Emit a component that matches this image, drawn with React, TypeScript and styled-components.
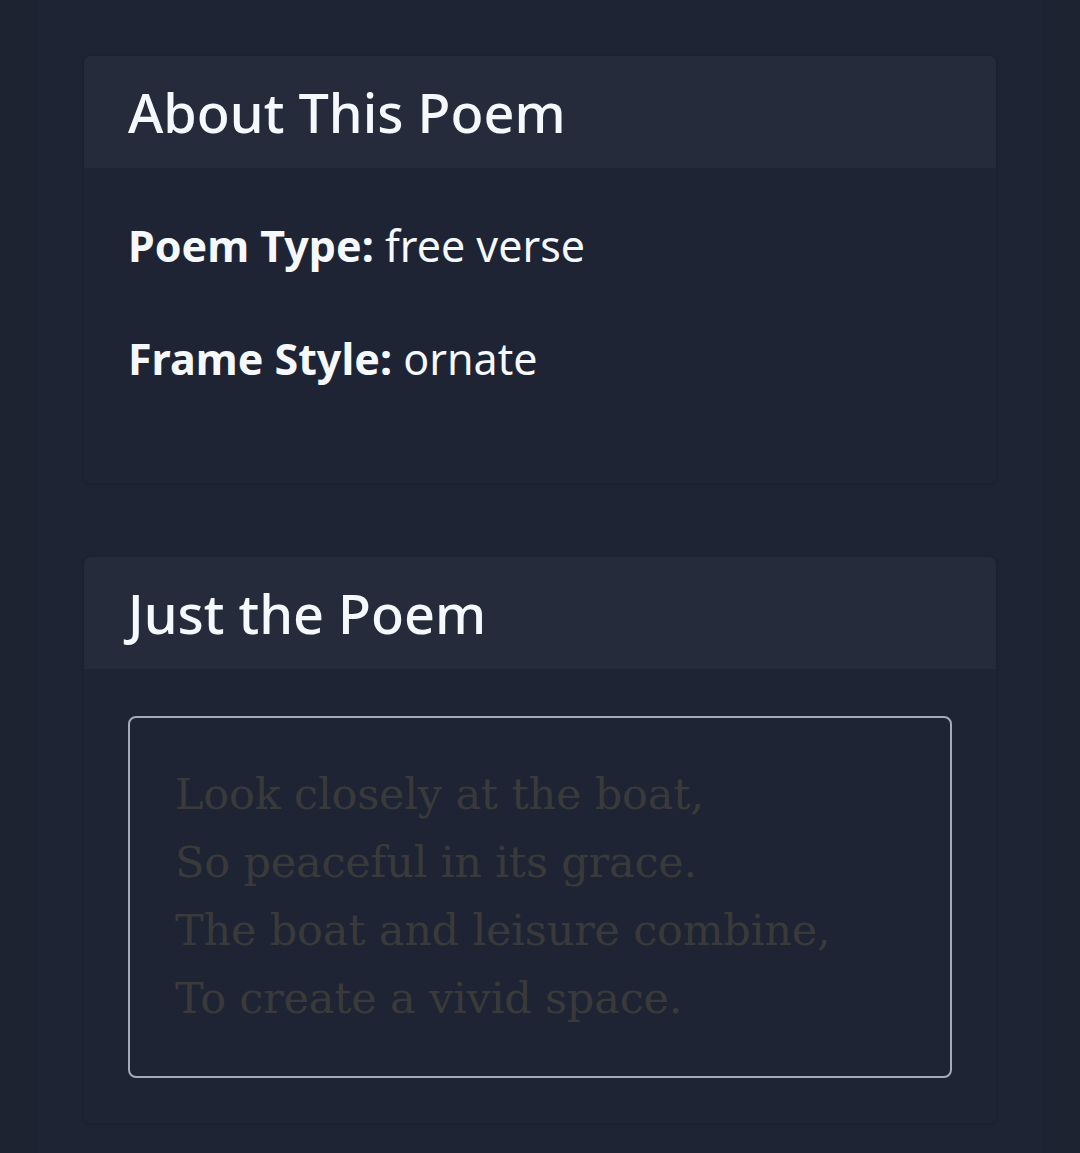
import React from "react";
import styled, { createGlobalStyle } from "styled-components";

const Global = createGlobalStyle`
  html, body { margin: 0; padding: 0; background: #1d2331; }
  body { font-family: "Noto Sans", "Open Sans", sans-serif; color: #f5f8fc; }
  * { box-sizing: border-box; }
`;

const Page = styled.div`
  width: 1010px;
  min-height: 1153px;
  margin: 0 auto;
  padding: 55px 47px 28px;
  background: #1e2433;
  border-left: 1px solid #1b2130;
  border-right: 1px solid #1b2130;
  display: flex;
  flex-direction: column;
  gap: 72px;
`;

const Card = styled.section`
  background: #1e2433;
  border-radius: 8px;
  border: 1px solid #1b2130;
  box-shadow: 0 1px 3px rgba(0, 0, 0, 0.12);
  overflow: hidden;
`;

const CardHeader = styled.header`
  background: #252b3a;
  height: 112px;
  padding: 0 44px;
  display: flex;
  align-items: center;
`;

const Title = styled.h2`
  margin: 0;
  font-size: 54px;
  font-weight: 500;
  line-height: 1.2;
  color: #f5f8fc;
`;

const CardBody = styled.div<{ $top: number; $bottom: number }>`
  padding: ${(p) => p.$top}px 44px ${(p) => p.$bottom}px;
`;

const Info = styled.p`
  margin: 0 0 47px;
  font-size: 43px;
  line-height: 66px;
  color: #f5f8fc;
`;

const Label = styled.strong`
  font-weight: 700;
`;

const PoemBox = styled.div`
  border: 2px solid #a3aab9;
  border-radius: 8px;
  padding: 42px 45px 44px;
`;

const Line = styled.div`
  font-family: "DejaVu Serif", "Liberation Serif", serif;
  font-size: 43px;
  letter-spacing: -0.2px;
  line-height: 68px;
  color: #3a3a3b;
  white-space: nowrap;
`;

const lines = [
  "Look closely at the boat,",
  "So peaceful in its grace.",
  "The boat and leisure combine,",
  "To create a vivid space.",
];

export default function App() {
  return (
    <>
      <Global />
      <Page>
        <Card>
          <CardHeader>
            <Title>About This Poem</Title>
          </CardHeader>
          <CardBody $top={45} $bottom={44}>
            <Info>
              <Label>Poem Type:</Label> free verse
            </Info>
            <Info>
              <Label>Frame Style:</Label> ornate
            </Info>
          </CardBody>
        </Card>
        <Card>
          <CardHeader>
            <Title>Just the Poem</Title>
          </CardHeader>
          <CardBody $top={47} $bottom={45}>
            <PoemBox>
              {lines.map((l) => (
                <Line key={l}>{l}</Line>
              ))}
            </PoemBox>
          </CardBody>
        </Card>
      </Page>
    </>
  );
}
